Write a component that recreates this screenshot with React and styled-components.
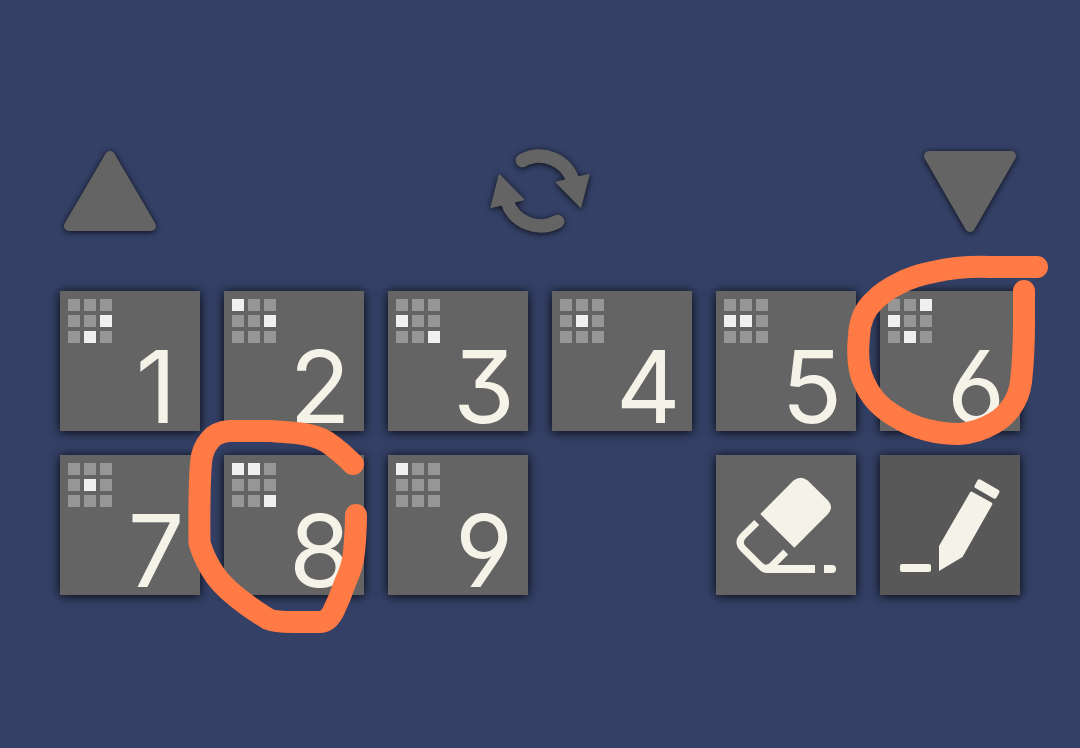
import React from 'react';
import styled, { createGlobalStyle } from 'styled-components';

const GlobalStyle = createGlobalStyle`
  * {
    box-sizing: border-box;
  }

  body {
    margin: 0;
    background-color: #344066;
    font-family: Inter, "Liberation Sans", sans-serif;
  }
`;

const Page = styled.main`
  min-height: 100vh;
  padding: 149px 60px 0;
`;

const Toolbar = styled.div`
  display: flex;
  justify-content: space-between;
  margin-bottom: 58px;
`;

const ToolButton = styled.button`
  width: 100px;
  height: 84px;
  padding: 0;
  border: none;
  background: none;
  color: #646464;
  cursor: pointer;

  svg {
    display: block;
    overflow: visible;
    filter: drop-shadow(0 1px 3px rgba(0, 0, 0, 0.8));
  }
`;

const Board = styled.div`
  position: relative;
`;

const Keys = styled.div`
  display: grid;
  grid-template-columns: repeat(6, 1fr);
  gap: 24px;
`;

const Key = styled.button`
  display: flex;
  flex-direction: column;
  justify-content: space-between;
  aspect-ratio: 1;
  min-width: 0;
  padding: 8px 12px 4px 8px;
  border: none;
  background-color: #646464;
  box-shadow: 0 1px 10px rgba(0, 0, 0, 0.9);
  color: #f5f2e8;
  font-family: inherit;
  cursor: pointer;
`;

const IconKey = styled(Key)`
  grid-column: ${props => props.$column};
  padding: 0;
  background-color: ${props => (props.$active ? '#585858' : '#646464')};

  svg {
    display: block;
    width: 100%;
  }
`;

const Dots = styled.span`
  display: grid;
  grid-template-columns: repeat(3, 12px);
  gap: 4px;
`;

const Dot = styled.span`
  height: 12px;
  background-color: ${props => (props.$on ? '#f0f0f0' : '#969696')};
`;

// open six and nine, flat-topped three
const Digit = styled.span`
  align-self: flex-end;
  width: 64px;
  text-align: center;
  font-size: 100px;
  line-height: 80px;
  font-feature-settings: "cv03", "cv04", "cv09";
`;

const Marks = styled.svg`
  position: absolute;
  top: 0;
  left: 0;
  width: 100%;
  overflow: visible;
  pointer-events: none;
`;

// cells that are lit in the 3x3 grid of each key
const keys = [
  { digit: 1, cells: [5, 7] },
  { digit: 2, cells: [0, 5] },
  { digit: 3, cells: [3, 8] },
  { digit: 4, cells: [4] },
  { digit: 5, cells: [3, 4] },
  { digit: 6, cells: [2, 3, 7] },
  { digit: 7, cells: [4] },
  { digit: 8, cells: [0, 1, 8] },
  { digit: 9, cells: [0] },
];

const Triangle = ({ points }) => (
  <svg viewBox="0 0 100 84" width="100" height="84" aria-hidden="true">
    <polygon points={points} fill="currentColor" stroke="currentColor" strokeWidth="10" strokeLinejoin="round" />
  </svg>
);

const CycleArrow = ({ transform }) => (
  <g transform={transform}>
    <path d="M32.3 11.5A35.2 35.2 0 0 1 83 32" fill="none" stroke="currentColor" strokeWidth="13.5" strokeLinecap="round" />
    <path d="M67 33.5L98.5 26L90.5 57.5Z" fill="currentColor" stroke="currentColor" strokeWidth="2" strokeLinejoin="round" />
  </g>
);

const CycleIcon = () => (
  <svg viewBox="0 0 100 84" width="100" height="84" aria-hidden="true">
    <CycleArrow />
    <CycleArrow transform="rotate(180 50 42)" />
  </svg>
);

const EraserIcon = () => (
  <svg viewBox="0 0 140 140" fill="currentColor" aria-hidden="true">
    <path d="M44.3 59L77.5 25.5Q84.7 20 91.7 25.5L112 45.5Q118 52 112 59L78.3 92.7Z" />
    <path d="M40.7 67.5L27.5 80.5Q21 87 27 93.5L44 110.5Q48 114 52 114H99M69.7 97L56 110.7Q49 116 44 110.5" fill="none" stroke="currentColor" strokeWidth="7" />
    <path d="M50 110H99V118H50Q46 118 43 114Z" />
    <path d="M108 110H116Q120 110 120 114Q120 118 116 118H108Z" />
  </svg>
);

const PencilIcon = () => (
  <svg viewBox="0 0 140 140" fill="currentColor" aria-hidden="true">
    <path d="M59 116V91L90 37.5Q91 36 92.5 37L111.5 47.5Q113 48.5 112 50L82.5 102Z" />
    <rect x="94.5" y="29" width="25" height="10" rx="2.5" transform="rotate(30 107 34)" />
    <rect x="20" y="109" width="31" height="8" rx="2" />
  </svg>
);

const App = () => {
  return (
    <Page>
      <GlobalStyle />
      <Toolbar>
        <ToolButton aria-label="Up">
          <Triangle points="50,7 9,77 91,77" />
        </ToolButton>
        <ToolButton aria-label="Refresh">
          <CycleIcon />
        </ToolButton>
        <ToolButton aria-label="Down">
          <Triangle points="9,7 91,7 50,78" />
        </ToolButton>
      </Toolbar>
      <Board>
        <Keys>
          {keys.map(({ digit, cells }) => (
            <Key key={digit}>
              <Dots>
                {Array.from({ length: 9 }, (_, i) => (
                  <Dot key={i} $on={cells.includes(i)} />
                ))}
              </Dots>
              <Digit>{digit}</Digit>
            </Key>
          ))}
          <IconKey $column={5} aria-label="Erase">
            <EraserIcon />
          </IconKey>
          <IconKey $column={6} $active aria-label="Pencil">
            <PencilIcon />
          </IconKey>
        </Keys>
        {/* hand drawn loops around 6 and 8 */}
        <Marks viewBox="0 0 960 304" fill="none" stroke="#ff7a45" strokeWidth="22" strokeLinecap="round" strokeLinejoin="round" aria-hidden="true">
          <path d="M977 -24H930Q900 -25 873 -19Q853 -15 840 -8Q825 -1 815 9Q800 22 799 45Q796 75 804 91Q813 112 833 124Q850 135 867 139Q883 143 899 143Q917 142 934 132Q945 126 952 115Q959 105 961 91Q964 65 964 30V0" />
          <path d="M293 173Q280 160 267 151Q255 144 237 142L210 140H170Q156 141 150 149Q142 158 141 172Q139 195 139.5 252Q145 270 155 284Q168 303 208 328Q215 331 233 331H258Q267 332 273 321Q280 307 285 292Q293 275 294 261Q296 240 296 224" />
        </Marks>
      </Board>
    </Page>
  );
};

export default App;
